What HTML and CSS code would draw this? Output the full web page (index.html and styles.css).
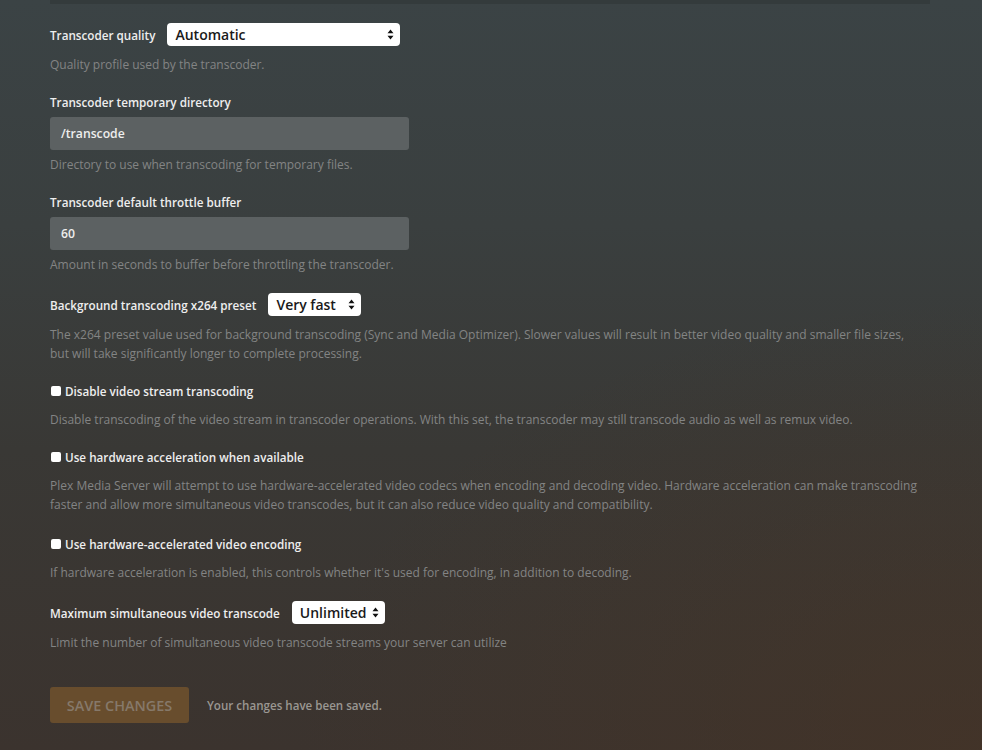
FILE: index.html
```html
<!DOCTYPE html>
<html lang="en">
<head>
    <meta charset="UTF-8">
    <title>Transcoder Settings</title>
    <link rel="stylesheet" href="styles.css">
</head>
<body>
    <div class="settings-page">
        <div class="top-bar"></div>

        <form class="settings-form">
            <!-- Transcoder quality -->
            <div class="form-group">
                <div class="inline-row">
                    <label>Transcoder quality</label>
                    <div class="select select-wide">
                        <span>Automatic</span>
                        <svg class="arrows" width="7" height="11" viewBox="0 0 7 11"><path d="M3.5 0.5 L6.5 4.3 H0.5 Z M3.5 10.5 L6.5 6.7 H0.5 Z" fill="#111"/></svg>
                    </div>
                </div>
                <p class="help">Quality profile used by the transcoder.</p>
            </div>

            <div class="form-group">
                <label>Transcoder temporary directory</label>
                <div class="text-input">/transcode</div>
                <p class="help help-input">Directory to use when transcoding for temporary files.</p>
            </div>

            <div class="form-group">
                <label>Transcoder default throttle buffer</label>
                <div class="text-input">60</div>
                <p class="help help-input">Amount in seconds to buffer before throttling the transcoder.</p>
            </div>

            <div class="form-group">
                <div class="inline-row">
                    <label>Background transcoding x264 preset</label>
                    <div class="select">
                        <span>Very fast</span>
                        <svg class="arrows" width="7" height="11" viewBox="0 0 7 11"><path d="M3.5 0.5 L6.5 4.3 H0.5 Z M3.5 10.5 L6.5 6.7 H0.5 Z" fill="#111"/></svg>
                    </div>
                </div>
                <p class="help">The x264 preset value used for background transcoding (Sync and Media Optimizer). Slower values will result in better video quality and smaller file sizes,<br>but will take significantly longer to complete processing.</p>
            </div>

            <div class="form-group">
                <label class="checkbox"><span class="box"></span>Disable video stream transcoding</label>
                <p class="help help-check">Disable transcoding of the video stream in transcoder operations. With this set, the transcoder may still transcode audio as well as remux video.</p>
            </div>

            <div class="form-group group-wide">
                <label class="checkbox"><span class="box"></span>Use hardware acceleration when available</label>
                <p class="help help-check">Plex Media Server will attempt to use hardware-accelerated video codecs when encoding and decoding video. Hardware acceleration can make transcoding<br>faster and allow more simultaneous video transcodes, but it can also reduce video quality and compatibility.</p>
            </div>

            <div class="form-group">
                <label class="checkbox"><span class="box"></span>Use hardware-accelerated video encoding</label>
                <p class="help help-check">If hardware acceleration is enabled, this controls whether it's used for encoding, in addition to decoding.</p>
            </div>

            <div class="form-group">
                <div class="inline-row">
                    <label>Maximum simultaneous video transcode</label>
                    <div class="select select-tight">
                        <span>Unlimited</span>
                        <svg class="arrows" width="7" height="11" viewBox="0 0 7 11"><path d="M3.5 0.5 L6.5 4.3 H0.5 Z M3.5 10.5 L6.5 6.7 H0.5 Z" fill="#111"/></svg>
                    </div>
                </div>
                <p class="help">Limit the number of simultaneous video transcode streams your server can utilize</p>
            </div>

            <div class="form-footer">
                <button type="button" class="btn-save" disabled>Save Changes</button>
                <span class="saved-msg">Your changes have been saved.</span>
            </div>
        </form>
    </div>
</body>
</html>
```

FILE: styles.css
```css
* {
    margin: 0;
    padding: 0;
    box-sizing: border-box;
}

html, body {
    height: 100%;
}

body {
    font-family: 'Open Sans', 'Noto Sans', sans-serif;
    background:
        radial-gradient(ellipse 70% 60% at 100% 100%, rgba(72, 52, 36, 0.55), transparent),
        linear-gradient(to bottom, #3b4345 0%, #3a3f3f 30%, #393835 60%, #3b332e 100%);
    color: #eee;
    overflow: hidden;
}

.settings-page {
    padding: 0 52px 0 50px;
}

.top-bar {
    height: 4px;
    background-color: #343b3c;
}

.settings-form {
    padding-top: 19px;
}

.form-group {
    margin-bottom: 19px;
}

.group-wide {
    margin-bottom: 21px;
}

.form-group label {
    display: block;
    font-size: 11.7px;
    font-weight: 600;
    line-height: 18px;
    color: #eee;
}

.inline-row {
    display: flex;
    align-items: center;
    gap: 12px;
}

.select {
    display: inline-flex;
    align-items: center;
    justify-content: space-between;
    gap: 12px;
    height: 23px;
    padding: 0 6px 0 8px;
    background-color: #fff;
    border-radius: 4px;
    color: #1a1a1a;
    font-size: 14px;
    font-weight: 600;
}

.select-wide {
    width: 233px;
}

.select-tight {
    gap: 5px;
}

.text-input {
    width: 359px;
    height: 33px;
    margin-top: 6px;
    padding: 0 11px;
    display: flex;
    align-items: center;
    background-color: #5c6162;
    border-radius: 3px;
    font-size: 12.2px;
    font-weight: 600;
    color: #eee;
}

.help {
    margin-top: 9px;
    font-size: 12px;
    line-height: 19px;
    color: #838484;
}

.help-input {
    margin-top: 5px;
}

.help-check {
    margin-top: 10px;
}

.checkbox {
    display: flex !important;
    align-items: center;
}

.box {
    width: 10px;
    height: 10px;
    margin: 0 4px 0 1px;
    background-color: #fff;
    border-radius: 2px;
}

.form-footer {
    display: flex;
    align-items: center;
    gap: 18px;
    margin-top: 35px;
}

.btn-save {
    width: 139px;
    height: 36px;
    background-color: #684d2d;
    color: #86796a;
    border: none;
    border-radius: 3px;
    font-family: inherit;
    font-size: 14.4px;
    font-weight: 600;
    text-transform: uppercase;
}

.saved-msg {
    font-size: 11.6px;
    font-weight: 600;
    color: #9a9792;
}
```
